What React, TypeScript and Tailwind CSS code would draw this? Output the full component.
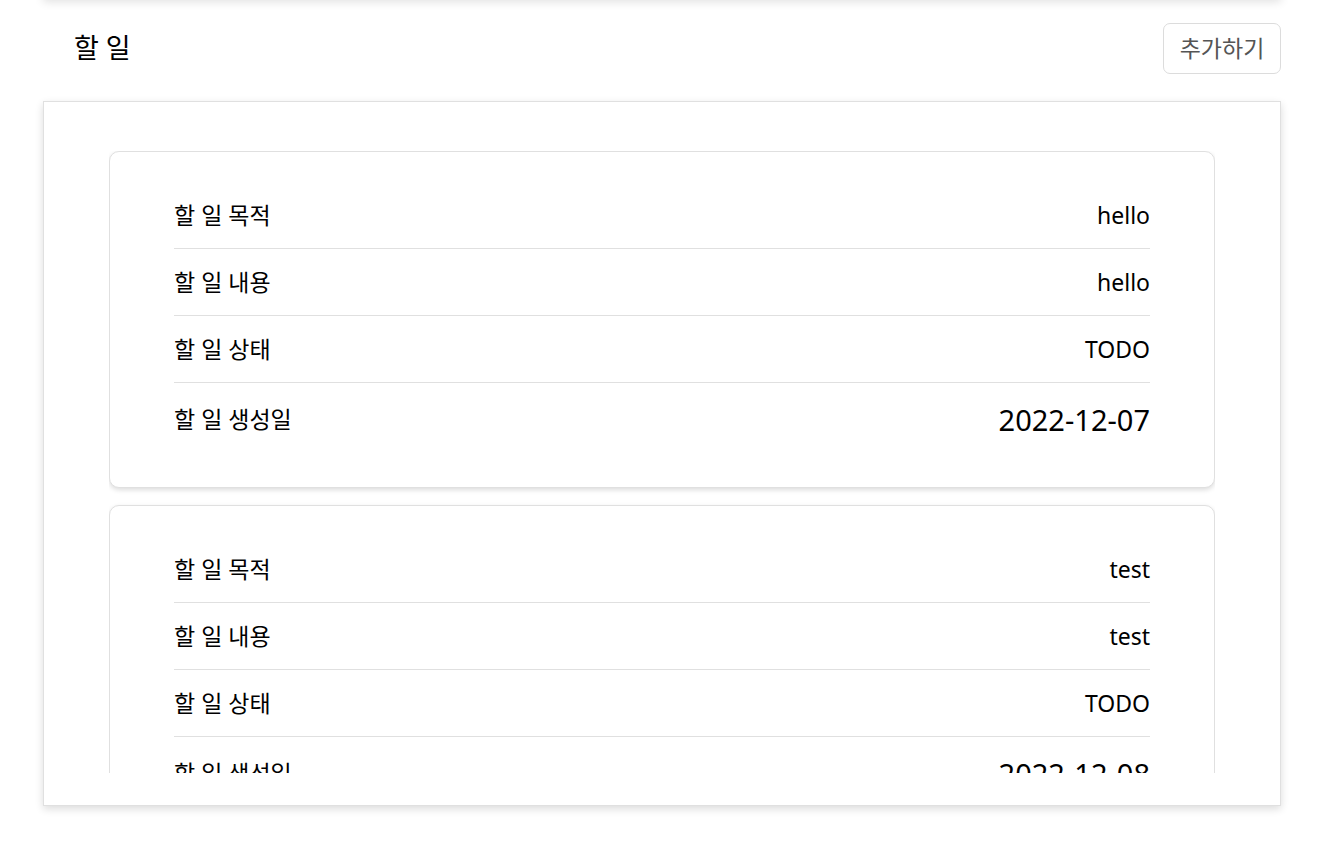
import React from "react";

type Todo = { goal: string; content: string; status: string; created: string };

const todos: Todo[] = [
  { goal: "hello", content: "hello", status: "TODO", created: "2022-12-07" },
  { goal: "test", content: "test", status: "TODO", created: "2022-12-08" },
];

const font = { fontFamily: '"Noto Sans", "Noto Sans CJK KR", sans-serif' };

function Row({ label, value, last, big }: { label: string; value: string; last?: boolean; big?: boolean }) {
  return (
    <div
      className={
        "flex items-center justify-between " +
        (last ? "h-[73px]" : "h-[67px] border-b border-[#e0e0e0]")
      }
    >
      <span className="text-[23px] text-black leading-none">{label}</span>
      <span className={(big ? "text-[29px]" : "text-[23px]") + " text-black leading-none"}>{value}</span>
    </div>
  );
}

function TodoCard({ t }: { t: Todo }) {
  return (
    <div className="shrink-0 rounded-[10px] border border-[#e0e0e0] bg-white px-[64px] pt-[30px] pb-[31px] shadow-[0_2px_5px_rgba(0,0,0,0.14)]">
      <Row label="할 일 목적" value={t.goal} />
      <Row label="할 일 내용" value={t.content} />
      <Row label="할 일 상태" value={t.status} />
      <Row label="할 일 생성일" value={t.created} last big />
    </div>
  );
}

export default function App() {
  return (
    <div className="min-h-[850px] bg-white overflow-hidden" style={font}>
      <div className="ml-[43px] w-[1238px]">
        <div className="-mt-4 h-4 bg-white shadow-[0_2px_10px_rgba(0,0,0,0.12)]" />
        <div className="flex items-center justify-between pt-[23px]">
          <h1 className="pl-[31px] text-[27px] text-black">할 일</h1>
          <button className="h-[51px] w-[118px] rounded-[7px] border border-[#dcdcdc] bg-white text-[23px] text-[#555]">
            추가하기
          </button>
        </div>
        <div className="mt-[27px] border border-[#e0e0e0] bg-white px-[65px] pt-[49px] pb-[32px] shadow-[0_3px_8px_rgba(0,0,0,0.14)]">
          <div className="flex h-[622px] flex-col gap-[17px] overflow-hidden">
            {todos.map((t, i) => (
              <TodoCard key={i} t={t} />
            ))}
          </div>
        </div>
      </div>
    </div>
  );
}
